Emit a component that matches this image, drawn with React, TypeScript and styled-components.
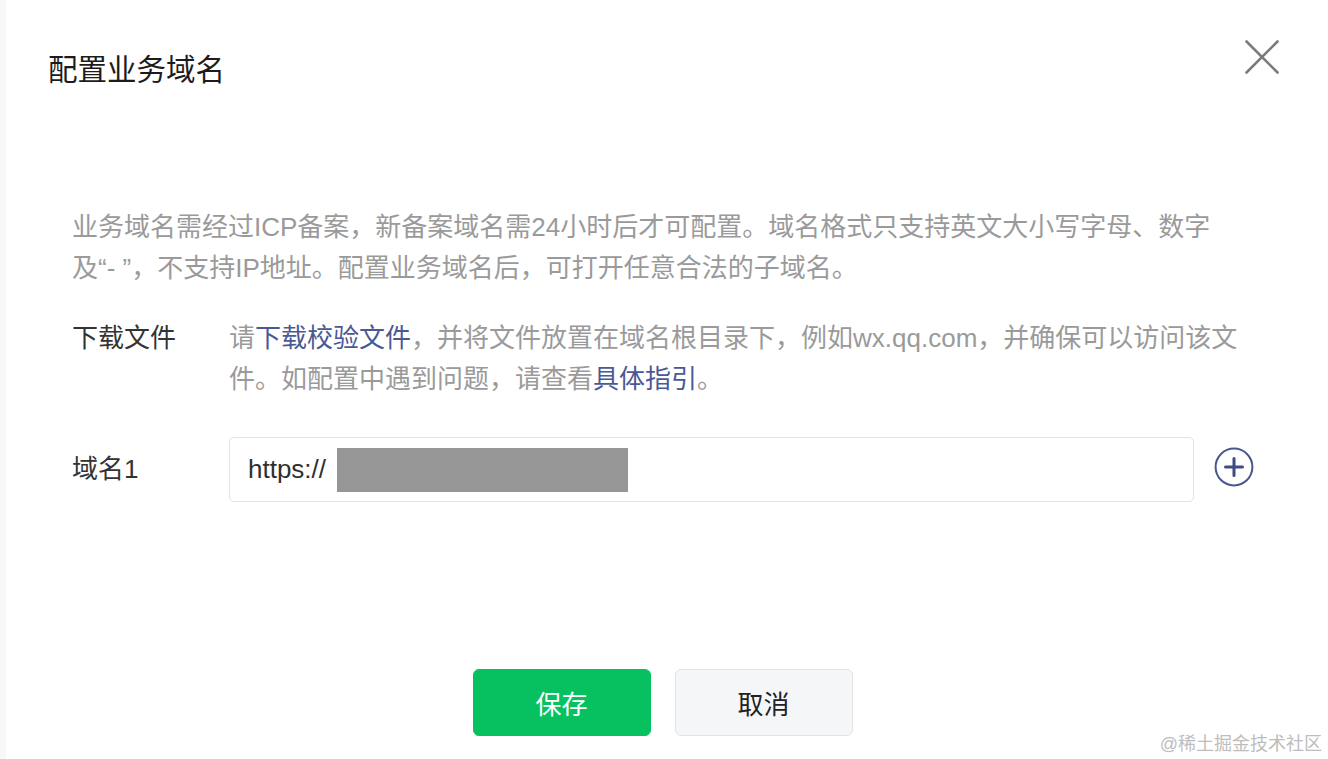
import styled, { createGlobalStyle } from "styled-components";

const GlobalStyle = createGlobalStyle`
  html, body {
    margin: 0;
    padding: 0;
    background: #ffffff;
  }
  body {
    font-family: "Liberation Sans", "Noto Sans CJK SC", sans-serif;
  }
`;

const CloseIcon = () => (
  <svg width="34" height="34" viewBox="0 0 34 34">
    <path
      d="M1.5 1.5 L32.5 32.5 M32.5 1.5 L1.5 32.5"
      stroke="#7b7b7b"
      strokeWidth="2.6"
      strokeLinecap="round"
      fill="none"
    />
  </svg>
);

const PlusIcon = () => (
  <svg width="40" height="40" viewBox="0 0 40 40">
    <circle cx="20" cy="20" r="18.4" stroke="#4a5690" strokeWidth="2" fill="none" />
    <path
      d="M20 11.5 V28.5 M11.5 20 H28.5"
      stroke="#3f4b86"
      strokeWidth="3"
      strokeLinecap="round"
      fill="none"
    />
  </svg>
);

const App = () => {
  return (
    <>
      <GlobalStyle />
      <Styled_Dialog>
        <Styled_Header>
          <Styled_Title>配置业务域名</Styled_Title>
          <Styled_CloseButton aria-label="关闭">
            <CloseIcon />
          </Styled_CloseButton>
        </Styled_Header>

        <Styled_Body>
          <Styled_Description>
            业务域名需经过ICP备案，新备案域名需24小时后才可配置。域名格式只支持英文大小写字母、数字及“-
            ”，不支持IP地址。配置业务域名后，可打开任意合法的子域名。
          </Styled_Description>

          <Styled_Row $align="flex-start" $top={29}>
            <Styled_Label>下载文件</Styled_Label>
            <Styled_RowText>
              请<Styled_Link>下载校验文件</Styled_Link>，并将文件放置在域名根目录下，例如wx.qq.com，并确保可以访问该文件。如配置中遇到问题，请查看<Styled_Link>具体指引</Styled_Link>。
            </Styled_RowText>
          </Styled_Row>

          <Styled_Row $align="center" $top={37}>
            <Styled_Label>域名1</Styled_Label>
            <Styled_Input>
              <Styled_Prefix>https://</Styled_Prefix>
              <Styled_Redacted />
            </Styled_Input>
            <Styled_AddButton aria-label="添加">
              <PlusIcon />
            </Styled_AddButton>
          </Styled_Row>
        </Styled_Body>

        <Styled_Footer>
          <Styled_Button $primary>保存</Styled_Button>
          <Styled_Button>取消</Styled_Button>
        </Styled_Footer>

        <Styled_Watermark>@稀土掘金技术社区</Styled_Watermark>
      </Styled_Dialog>
    </>
  );
};

export default App;

const Styled_Dialog = styled.div`
  position: relative;
  width: 1328px;
  height: 759px;
  box-sizing: border-box;
  background: #ffffff;
  border-left: 6px solid #f8f8f8;
  overflow: hidden;
`;

const Styled_Header = styled.div`
  display: flex;
  justify-content: space-between;
  align-items: flex-start;
  height: 100px;
  box-sizing: border-box;
  padding: 40px 49px 0 42px;
`;

const Styled_Title = styled.div`
  margin-top: 10px;
  font-size: 29.5px;
  line-height: 40px;
  color: #1c1c1c;
`;

const Styled_CloseButton = styled.button`
  display: flex;
  padding: 0;
  border: none;
  background: none;
  cursor: pointer;
`;

const Styled_Body = styled.div`
  padding: 107px 0 0 66px;
  width: 1190px;
`;

const Styled_Description = styled.div`
  max-width: 1150px;
  font-size: 26px;
  line-height: 41px;
  color: #9a9a9a;
`;

const Styled_Row = styled.div<{ $align: string; $top: number }>`
  display: flex;
  align-items: ${(p) => p.$align};
  margin-top: ${(p) => p.$top}px;
`;

const Styled_Label = styled.div`
  flex: 0 0 157px;
  font-size: 26px;
  line-height: 41px;
  color: #333333;
`;

const Styled_RowText = styled.div`
  flex: 1;
  font-size: 26px;
  line-height: 41px;
  color: #9a9a9a;
`;

const Styled_Link = styled.span`
  color: #4a5995;
`;

const Styled_Input = styled.div`
  display: flex;
  flex-shrink: 0;
  align-items: center;
  width: 965px;
  height: 65px;
  box-sizing: border-box;
  padding: 0 18px;
  border: 1.5px solid #e2e2e2;
  border-radius: 5px;
`;

const Styled_Prefix = styled.span`
  font-size: 26px;
  color: #2f2f2f;
  margin-right: 11px;
`;

const Styled_Redacted = styled.div`
  width: 291px;
  height: 44px;
  background: #969696;
`;

const Styled_AddButton = styled.button`
  display: flex;
  flex-shrink: 0;
  margin: 0 0 6px 20px;
  padding: 0;
  border: none;
  background: none;
  cursor: pointer;
`;

const Styled_Footer = styled.div`
  display: flex;
  justify-content: center;
  gap: 24px;
  margin-top: 167px;
  padding-right: 9px;
`;

const Styled_Button = styled.button<{ $primary?: boolean }>`
  width: 178px;
  height: 67px;
  box-sizing: border-box;
  border-radius: 6px;
  font-family: "Liberation Sans", "Noto Sans CJK SC", sans-serif;
  font-size: 26px;
  cursor: pointer;
  color: ${(p) => (p.$primary ? "#ffffff" : "#222222")};
  background: ${(p) => (p.$primary ? "#07c160" : "#f5f6f8")};
  border: 1.5px solid ${(p) => (p.$primary ? "#07c160" : "#e2e3e5")};
`;

const Styled_Watermark = styled.div`
  position: absolute;
  right: 6px;
  bottom: 4px;
  font-size: 18px;
  color: #bdbdbd;
`;
